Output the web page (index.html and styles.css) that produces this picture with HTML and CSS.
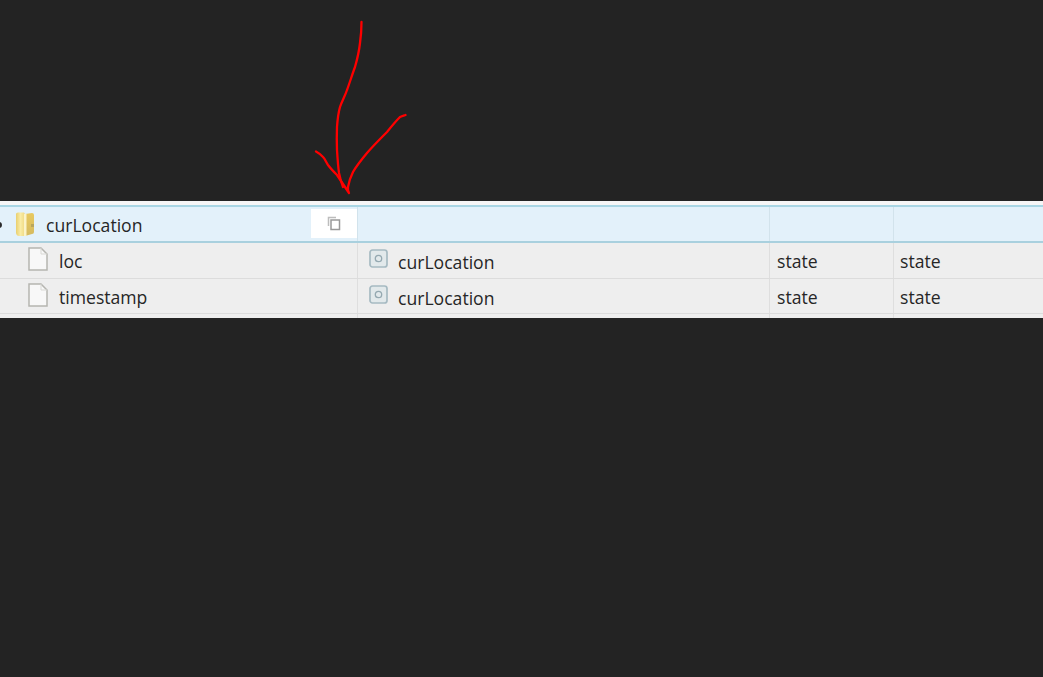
FILE: index.html
```html
<!DOCTYPE html>
<html lang="en">
<head>
<meta charset="utf-8">
<title>curLocation</title>
<link rel="stylesheet" href="styles.css">
</head>
<body>
<svg class="arrow" width="1043" height="200" viewBox="0 0 1043 200" fill="none">
  <path d="M361.500 22C361.500 30 361 36 360 43C359 52 357 60 355 67C352 75 350 82 347 90C345 96 342 101 340 107C338 114 337.500 120 337 127C336.700 135 336.700 142 337 150C337.500 158 338 166 339 173C340 178 341.500 183 343 187" />
  <path d="M316 151.500C319 153 321 155 323 157C325 159 326 162 328 165C331 169 334 172 337 175C341 181 345 187 349 193C348 191 347.700 189 348 187C349 181 351 176 353 172C357 165 362 159 367 153C373 146 380 139 387 132C391 127 396 121 400 117C402 116 404 115.500 405.500 115" />
</svg>
<main class="table">
  <div class="row row-group">
    <div class="cell cell-name">
      <span class="caret"></span>
      <svg class="folder" width="20" height="24" viewBox="0 0 20 24">
        <defs>
          <linearGradient id="folderLeft" x1="0" y1="0" x2="1" y2="0">
            <stop offset="0" stop-color="#e9cf6e"/>
            <stop offset="0.5" stop-color="#f9eca6"/>
            <stop offset="1" stop-color="#efd880"/>
          </linearGradient>
          <linearGradient id="folderRight" x1="0" y1="0" x2="0" y2="1">
            <stop offset="0" stop-color="#e8c95f"/>
            <stop offset="1" stop-color="#d5ba60"/>
          </linearGradient>
        </defs>
        <path d="M1 2Q1 0.500 3 0.500H9L10 2V24H4Q1.500 24 1 21Z" fill="url(#folderLeft)"/>
        <path d="M10 2L17 1Q19 1 19 3V20Q19 22 17 22L10 24Z" fill="url(#folderRight)"/>
        <path d="M9 2H11.500V24H9Z" fill="#fbf3c8"/>
        <path d="M16 12H19V15H16Z" fill="#b9a65c"/>
      </svg>
      <span class="label">curLocation</span>
      <span class="copy">
        <svg width="14" height="15" viewBox="0 0 14 15" fill="none">
          <path d="M1.500 10V1.500H9" stroke="#bdbdbd" stroke-width="1.500"/>
          <rect x="4" y="4" width="8.500" height="9.500" fill="#fff" stroke="#999" stroke-width="1.500"/>
        </svg>
      </span>
    </div>
    <div class="cell"></div>
    <div class="cell"></div>
    <div class="cell"></div>
  </div>
  <div class="row">
    <div class="cell cell-name cell-child">
      <svg class="file" width="20" height="24" viewBox="0 0 20 24" fill="none">
        <path d="M1 1H13L19 7V23H1Z" fill="#f8f8f8" stroke="#b5b5b0" stroke-width="1.500"/>
        <path d="M13 1V7H19" stroke="#d8d8d4"/>
      </svg>
      <span class="label">loc</span>
    </div>
    <div class="cell cell-type">
      <svg class="entity" width="19" height="19" viewBox="0 0 19 19" fill="none">
        <rect x="1" y="1" width="17" height="17" rx="2.500" fill="#e2e9eb" stroke="#a6bac2" stroke-width="1.700"/>
        <circle cx="9.500" cy="9.500" r="3.200" stroke="#95a9b1" stroke-width="1.300"/>
      </svg>
      <span class="label label-type">curLocation</span>
    </div>
    <div class="cell cell-text">state</div>
    <div class="cell cell-text">state</div>
  </div>
  <div class="row">
    <div class="cell cell-name cell-child">
      <svg class="file" width="20" height="24" viewBox="0 0 20 24" fill="none">
        <path d="M1 1H13L19 7V23H1Z" fill="#f8f8f8" stroke="#b5b5b0" stroke-width="1.500"/>
        <path d="M13 1V7H19" stroke="#d8d8d4"/>
      </svg>
      <span class="label">timestamp</span>
    </div>
    <div class="cell cell-type">
      <svg class="entity" width="19" height="19" viewBox="0 0 19 19" fill="none">
        <rect x="1" y="1" width="17" height="17" rx="2.500" fill="#e2e9eb" stroke="#a6bac2" stroke-width="1.700"/>
        <circle cx="9.500" cy="9.500" r="3.200" stroke="#95a9b1" stroke-width="1.300"/>
      </svg>
      <span class="label label-type">curLocation</span>
    </div>
    <div class="cell cell-text">state</div>
    <div class="cell cell-text">state</div>
  </div>
  <div class="row row-tail">
    <div class="cell"></div>
    <div class="cell"></div>
    <div class="cell"></div>
    <div class="cell"></div>
  </div>
</main>
</body>
</html>
```
FILE: styles.css
```css
html, body {
  margin: 0;
  height: 100%;
  background: #232323;
  overflow: hidden;
}
body {
  padding-top: 201px;
  box-sizing: border-box;
  font-family: "Open Sans", "Noto Sans", sans-serif;
  font-size: 17.600px;
  color: #262626;
}
.arrow {
  position: absolute;
  left: 0;
  top: 0;
}
.arrow path {
  stroke: #ff0000;
  stroke-width: 2.300;
  stroke-linecap: round;
  stroke-linejoin: round;
}
.table {
  background: #eeeeee;
  padding-top: 4px;
  box-shadow: inset 0 4px 0 #f6f6f6;
}
.row {
  display: grid;
  grid-template-columns: 358px 412px 124px 1fr;
  height: 35.500px;
  box-sizing: border-box;
  border-bottom: 1px solid #dcdcdc;
}
.row-group {
  height: 38px;
  background: #e3f1fa;
  border-top: 2px solid #a9d6e4;
  border-bottom: 2px solid #a9d0de;
}
.row-tail {
  height: 4px;
  border-bottom: 0;
}
.cell {
  display: flex;
  align-items: center;
  box-sizing: border-box;
  padding-top: 2px;
  border-right: 1px solid #dedede;
  min-width: 0;
}
.row-tail .cell {
  padding-top: 0;
}
.row-group .cell {
  border-right-color: #d2e3ec;
}
.cell:last-child {
  border-right: 0;
}
.cell-name {
  position: relative;
}
.caret {
  position: absolute;
  left: -4px;
  top: 15px;
  width: 6px;
  height: 6px;
  border-radius: 50%;
  background: #2a2a2a;
}
.folder {
  margin-left: 15px;
  margin-right: 11px;
  margin-top: -2px;
}
.cell-child {
  padding-left: 28px;
}
.file {
  margin-right: 11px;
  margin-top: -4px;
}
.copy {
  position: absolute;
  right: 0;
  top: 2px;
  width: 46px;
  height: 29px;
  background: #fff;
  display: flex;
  align-items: center;
  justify-content: center;
}
.cell-type {
  padding-left: 11px;
}
.entity {
  margin-right: 10px;
  margin-top: -5px;
}
.label-type {
  margin-top: 2px;
}
.cell-text {
  padding-left: 7px;
}
.cell-text:last-child {
  padding-left: 6px;
}
```
